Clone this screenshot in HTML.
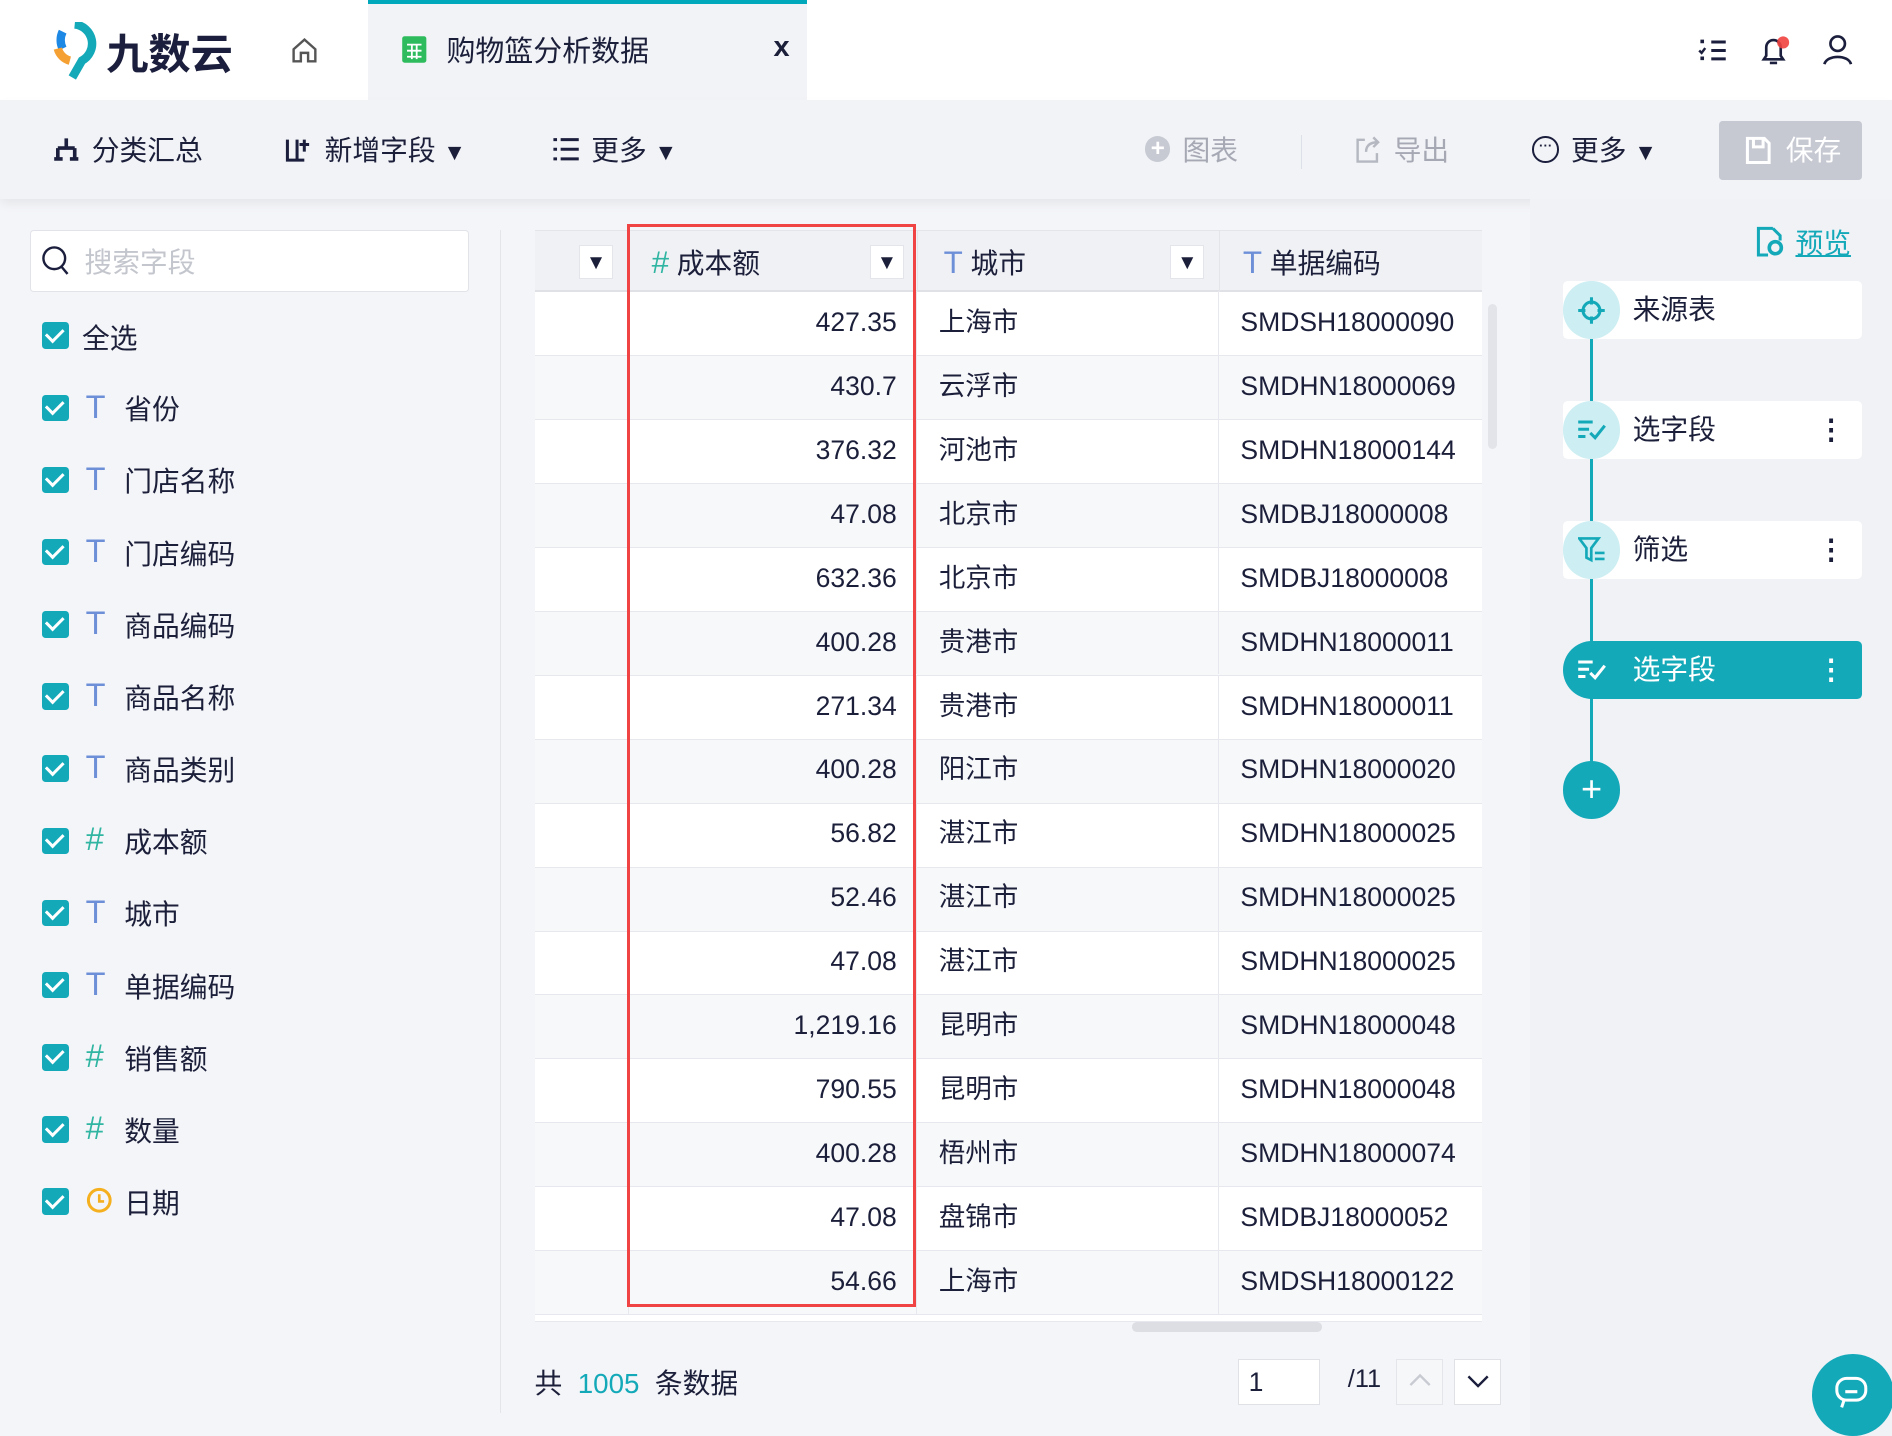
<!DOCTYPE html>
<html><head><meta charset="utf-8"><style>
*{box-sizing:border-box;margin:0;padding:0}
html,body{width:1892px;height:1436px;overflow:hidden;background:#f4f5f8}
#w{zoom:1.20663;width:1568px;height:1190px;position:relative;font-family:"Liberation Sans","Noto Sans CJK SC",sans-serif;color:#1c1f3a;background:#f4f5f8}
.a{position:absolute}
.top{left:0;top:0;width:1568px;height:83px;background:#fff}
.tab{left:305px;top:0;width:364px;height:83px;background:#f2f3f7;border-top:4px solid #00a8bc}
.tb{left:0;top:83px;width:1568px;height:82px;background:#f2f3f7;box-shadow:0 4px 8px rgba(0,0,0,.06)}
.t22{font-size:23px}
.tri{font-size:19px}
.cb{width:22px;height:22px;background:#14a9b9;border-radius:3px}
.cb:after{content:"";position:absolute;left:6px;top:2px;width:7px;height:12px;border:solid #fff;border-width:0 3px 3px 0;transform:rotate(45deg)}
.row{position:absolute;left:443px;width:785px;height:53px;border-bottom:1px solid #e6e8ee;font-size:22px}
.row div{position:absolute;top:-1px;height:53px;line-height:53px}
.c1{left:0;width:78px;border-right:1px solid #e6e8ee}
.c2{left:78px;width:239px;text-align:right;padding-right:16px;border-right:1px solid #e6e8ee}
.c3{left:317px;width:250px;padding-left:18px;border-right:1px solid #e6e8ee}
.c4{left:567px;width:218px;padding-left:18px}
.dd{width:28px;height:28px;background:#fff;border:1px solid #e3e5ea;font-size:17px;text-align:center;line-height:28px}
.card{left:1295px;width:248px;height:48px;background:#fff;border-radius:4px;font-size:23px;line-height:48px;padding-left:58px}
.circ{left:1295px;width:48px;height:48px;border-radius:50%;background:#cdeef2}
.dots{position:absolute;right:14px;top:0;font-weight:bold}
</style></head><body><div id="w">
<div class="a top"></div>
<svg class="a" style="left:44px;top:18px" width="38" height="48" viewBox="0 0 38 48"><path d="M18 2a16 16 0 0 1 6 30L16 46" stroke="#14a9b9" stroke-width="7" fill="none"/><path d="M8 8a16 16 0 0 0 0 14" stroke="#1e88e5" stroke-width="7" fill="none"/><path d="M4 22a14 14 0 0 0 10 10" stroke="#f5a032" stroke-width="7" fill="none"/></svg>
<div class="a" style="left:88px;top:17px;font-size:35px;font-weight:bold;color:#1b1e3c">九数云</div>
<svg class="a" style="left:240px;top:30px" width="24" height="24" viewBox="0 0 24 24"><path d="M3 11L12 3l9 8v10H15v-7H9v7H3z" fill="none" stroke="#555" stroke-width="2"/></svg>
<div class="a tab"></div>
<svg class="a" style="left:332px;top:29px" width="22" height="24"><rect x="1" y="1" width="20" height="22" rx="2" fill="#2dbb5d"/><path d="M5 8h12M5 13h12M5 18h12M9 8v12M13 8v12" stroke="#fff" stroke-width="1.5"/></svg>
<div class="a t22" style="left:370px;top:23px;font-size:24px">购物篮分析数据</div>
<div class="a" style="left:641px;top:26px;font-size:24px;font-weight:bold">x</div>
<svg class="a" style="left:1407px;top:30px" width="24" height="24"><path d="M11 5h12M11 12h12M11 19h12" stroke="#1b1e3c" stroke-width="2.5"/><rect x="2" y="3" width="3" height="3" fill="#1b1e3c"/><path d="M1 12l2 2 3-4" stroke="#1b1e3c" stroke-width="2" fill="none"/><rect x="2" y="17" width="3" height="3" fill="#1b1e3c"/></svg>
<svg class="a" style="left:1458px;top:28px" width="26" height="28"><path d="M4 21h16l-2-3V11a6 6 0 0 0-12 0v7z M9 24h6" stroke="#1b1e3c" stroke-width="2.2" fill="none"/><circle cx="20" cy="7" r="5" fill="#f0413e" opacity=".9"/></svg>
<svg class="a" style="left:1510px;top:28px" width="26" height="26"><circle cx="13" cy="8" r="6" stroke="#1b1e3c" stroke-width="2.2" fill="none"/><path d="M2 25c2-8 20-8 22 0" stroke="#1b1e3c" stroke-width="2.2" fill="none"/></svg>
<div class="a tb"></div>
<svg class="a" style="left:44px;top:113px" width="22" height="22"><path d="M11 2v8M4 10h14M4 10v9M18 10v9M1 19h7M14 19h7" stroke="#1b1e3c" stroke-width="3" fill="none"/></svg>
<div class="a t22" style="left:76px;top:106px">分类汇总</div>
<svg class="a" style="left:236px;top:113px" width="24" height="22"><path d="M2 3v17h8V3M2 20h14M16 3v10M12 7h8" stroke="#1b1e3c" stroke-width="2.5" fill="none"/></svg>
<div class="a t22" style="left:269px;top:106px">新增字段 <span class="tri">▼</span></div>
<svg class="a" style="left:457px;top:113px" width="24" height="22"><path d="M8 3h15M8 11h15M8 19h15M2 3h3M2 11h3M2 19h3" stroke="#1b1e3c" stroke-width="2.5"/></svg>
<div class="a t22" style="left:490px;top:106px">更多 <span class="tri">▼</span></div>
<div class="a" style="left:949px;top:113px;width:21px;height:21px;border-radius:50%;background:#c8cad3;color:#fff;text-align:center;font-weight:bold;line-height:21px;font-size:20px">+</div>
<div class="a t22" style="left:980px;top:106px;color:#a6a8b4">图表</div>
<div class="a" style="left:1078px;top:112px;width:1px;height:28px;background:#dde0e6"></div>
<svg class="a" style="left:1122px;top:112px" width="24" height="24"><path d="M9 4H3v18h16v-7M10 14c0-6 4-8 10-8M16 2l4 4-4 4" stroke="#b5b7c1" stroke-width="2" fill="none"/></svg>
<div class="a t22" style="left:1155px;top:106px;color:#a6a8b4">导出</div>
<div class="a" style="left:1270px;top:113px;width:22px;height:22px;border-radius:50%;border:2px solid #1b1e3c;font-size:11px;text-align:center;line-height:14px;font-weight:bold">···</div>
<div class="a t22" style="left:1302px;top:106px">更多 <span class="tri">▼</span></div>
<div class="a" style="left:1425px;top:100px;width:118px;height:49px;background:#c6c8d2;border-radius:3px"></div>
<svg class="a" style="left:1446px;top:113px" width="22" height="24"><path d="M2 2h14l4 4v16H2z M7 2v7h8V2" stroke="#fff" stroke-width="2.5" fill="none"/></svg>
<div class="a t22" style="left:1480px;top:106px;color:#fff">保存</div>
<div class="a" style="left:25px;top:191px;width:364px;height:51px;background:#fff;border:1px solid #e1e3e9;border-radius:3px"></div>
<svg class="a" style="left:34px;top:203px" width="26" height="28"><circle cx="11" cy="11" r="9" stroke="#1b1e3c" stroke-width="2" fill="none"/><path d="M17 18l5 6" stroke="#1b1e3c" stroke-width="2"/></svg>
<div class="a t22" style="left:70px;top:199px;color:#c4c6ce">搜索字段</div>
<div class="a" style="left:414px;top:191px;width:1px;height:980px;background:#e3e5ea"></div>
<div class="a cb" style="left:35px;top:267px"></div><div class="a t22" style="left:68px;top:262px">全选</div>
<div id="fl"></div>
<div class="a" style="left:443px;top:191px;width:785px;height:51px;background:#f0f1f5;border-bottom:2px solid #dfe1e7;border-top:1px solid #e3e5ea"></div>
<div class="a" style="left:520px;top:191px;width:1px;height:51px;background:#e3e5ea"></div>
<div class="a" style="left:760px;top:191px;width:1px;height:51px;background:#e3e5ea"></div>
<div class="a" style="left:1010px;top:191px;width:1px;height:51px;background:#e3e5ea"></div>
<div class="a dd" style="left:480px;top:203px">▼</div>
<div class="a t22" style="left:540px;top:200px"><span style="color:#2fb5a2;font-size:26px">#</span> 成本额</div>
<div class="a dd" style="left:721px;top:203px">▼</div>
<div class="a t22" style="left:782px;top:200px"><span style="color:#6d8fd8;font-size:26px">T</span> 城市</div>
<div class="a dd" style="left:970px;top:203px">▼</div>
<div class="a t22" style="left:1030px;top:200px"><span style="color:#6d8fd8;font-size:26px">T</span> 单据编码</div>
<div id="rows"></div>
<div class="a" style="left:520px;top:186px;width:239px;height:897px;border:3px solid #f04444"></div>
<div class="a" style="left:1233px;top:252px;width:8px;height:120px;background:#e2e4e9;border-radius:4px"></div>
<div class="a" style="left:938px;top:1096px;width:158px;height:8px;background:#dcdee4;border-radius:4px"></div>
<div class="a t22" style="left:443px;top:1128px">共 &nbsp;<span style="color:#14a9b9">1005</span>&nbsp; 条数据</div>
<div class="a" style="left:1026px;top:1126px;width:68px;height:38px;background:#fff;border:1px solid #dfe1e7;font-size:22px;line-height:38px;padding-left:8px">1</div>
<div class="a" style="left:1117px;top:1131px;font-size:21px">/11</div>
<div class="a" style="left:1157px;top:1126px;width:39px;height:38px;background:#f6f7f9;border:1px solid #e3e5ea"></div>
<svg class="a" style="left:1167px;top:1138px" width="20" height="12"><path d="M2 10l8-8 8 8" stroke="#c9cbd2" stroke-width="2" fill="none"/></svg>
<div class="a" style="left:1205px;top:1126px;width:39px;height:38px;background:#fff;border:1px solid #dfe1e7"></div>
<svg class="a" style="left:1215px;top:1139px" width="20" height="12"><path d="M2 2l8 8 8-8" stroke="#1b1e3c" stroke-width="2" fill="none"/></svg>
<div class="a" style="left:1268px;top:165px;width:300px;height:1025px;background:#f1f2f6"></div>
<svg class="a" style="left:1455px;top:187px" width="24" height="26"><path d="M14 2H2v22h8M14 2l6 6v4" stroke="#14a9b9" stroke-width="2.5" fill="none"/><circle cx="16" cy="18" r="5" stroke="#14a9b9" stroke-width="3" fill="none"/></svg>
<div class="a t22" style="left:1488px;top:183px;color:#14a9b9;text-decoration:underline">预览</div>
<div class="a" style="left:1318px;top:270px;width:2px;height:380px;background:#14a9b9"></div>
<div class="a card" style="top:233px">来源表</div>
<div class="a circ" style="top:233px"></div>
<svg class="a" style="left:1307px;top:245px" width="24" height="24"><circle cx="12" cy="12" r="7" stroke="#14a9b9" stroke-width="2.5" fill="none"/><path d="M12 1v6M12 17v6M1 12h6M17 12h6" stroke="#14a9b9" stroke-width="2.5"/></svg>
<div class="a card" style="top:332px">选字段<span class="dots">⋮</span></div>
<div class="a circ" style="top:332px"></div>
<svg class="a" style="left:1307px;top:345px" width="24" height="22"><path d="M1 5h12M1 11h9M1 17h6M11 14l4 4 8-10" stroke="#14a9b9" stroke-width="2.5" fill="none"/></svg>
<div class="a card" style="top:432px">筛选<span class="dots">⋮</span></div>
<div class="a circ" style="top:432px"></div>
<svg class="a" style="left:1308px;top:444px" width="24" height="24"><path d="M1 2h16l-6 8v10l-4-2v-8z M14 14h8M14 19h8" stroke="#14a9b9" stroke-width="2.2" fill="none"/></svg>
<div class="a card" style="top:531px;background:#14a9b9;color:#fff;border-radius:24px 4px 4px 24px">选字段<span class="dots">⋮</span></div>
<svg class="a" style="left:1307px;top:544px" width="24" height="22"><path d="M1 5h12M1 11h9M1 17h6M11 14l4 4 8-10" stroke="#fff" stroke-width="2.5" fill="none"/></svg>
<div class="a" style="left:1295px;top:631px;width:48px;height:48px;border-radius:50%;background:#14a9b9;color:#fff;font-size:30px;text-align:center;line-height:46px">+</div>
<div class="a" style="left:1502px;top:1122px;width:68px;height:68px;border-radius:50%;background:#14a9b9"></div>
<svg class="a" style="left:1518px;top:1140px" width="34" height="30"><rect x="4" y="2" width="24" height="18" rx="8" stroke="#fff" stroke-width="2.5" fill="none"/><path d="M11 13h10M10 20l-2 6" stroke="#fff" stroke-width="2.5" fill="none"/></svg>
</div>
<script>
var f=[["T","省份"],["T","门店名称"],["T","门店编码"],["T","商品编码"],["T","商品名称"],["T","商品类别"],["#","成本额"],["T","城市"],["T","单据编码"],["#","销售额"],["#","数量"],["D","日期"]],h="";
f.forEach(function(x,i){var y=327+i*59.8;var ic=x[0]=="T"?'<span style="color:#6d8fd8;font-size:27px">T</span>':x[0]=="#"?'<span style="color:#2fb5a2;font-size:27px">#</span>':'<svg width="22" height="22" style="margin-top:4px"><circle cx="11" cy="11" r="9" stroke="#f5b020" stroke-width="2.5" fill="none"/><path d="M11 6v6h4" stroke="#f5b020" stroke-width="2.2" fill="none"/></svg>';
h+='<div class="a cb" style="left:35px;top:'+y+'px"></div><div class="a" style="left:71px;top:'+(y-5)+'px;line-height:30px">'+ic+'</div><div class="a t22" style="left:103px;top:'+(y-6)+'px">'+x[1]+'</div>';});
document.getElementById("fl").outerHTML=h;
var r=[["427.35","上海市","SMDSH18000090"],["430.7","云浮市","SMDHN18000069"],["376.32","河池市","SMDHN18000144"],["47.08","北京市","SMDBJ18000008"],["632.36","北京市","SMDBJ18000008"],["400.28","贵港市","SMDHN18000011"],["271.34","贵港市","SMDHN18000011"],["400.28","阳江市","SMDHN18000020"],["56.82","湛江市","SMDHN18000025"],["52.46","湛江市","SMDHN18000025"],["47.08","湛江市","SMDHN18000025"],["1,219.16","昆明市","SMDHN18000048"],["790.55","昆明市","SMDHN18000048"],["400.28","梧州市","SMDHN18000074"],["47.08","盘锦市","SMDBJ18000052"],["54.66","上海市","SMDSH18000122"]],g="";
r.forEach(function(x,i){g+='<div class="row" style="top:'+(242+i*53)+'px;background:'+(i%2?'#f7f8fa':'#fff')+'"><div class="c1"></div><div class="c2">'+x[0]+'</div><div class="c3">'+x[1]+'</div><div class="c4">'+x[2]+'</div></div>';});
g+='<div class="row" style="top:1090px;height:6px;background:#fff"></div>';
document.getElementById("rows").outerHTML=g;
</script>
</body></html>
